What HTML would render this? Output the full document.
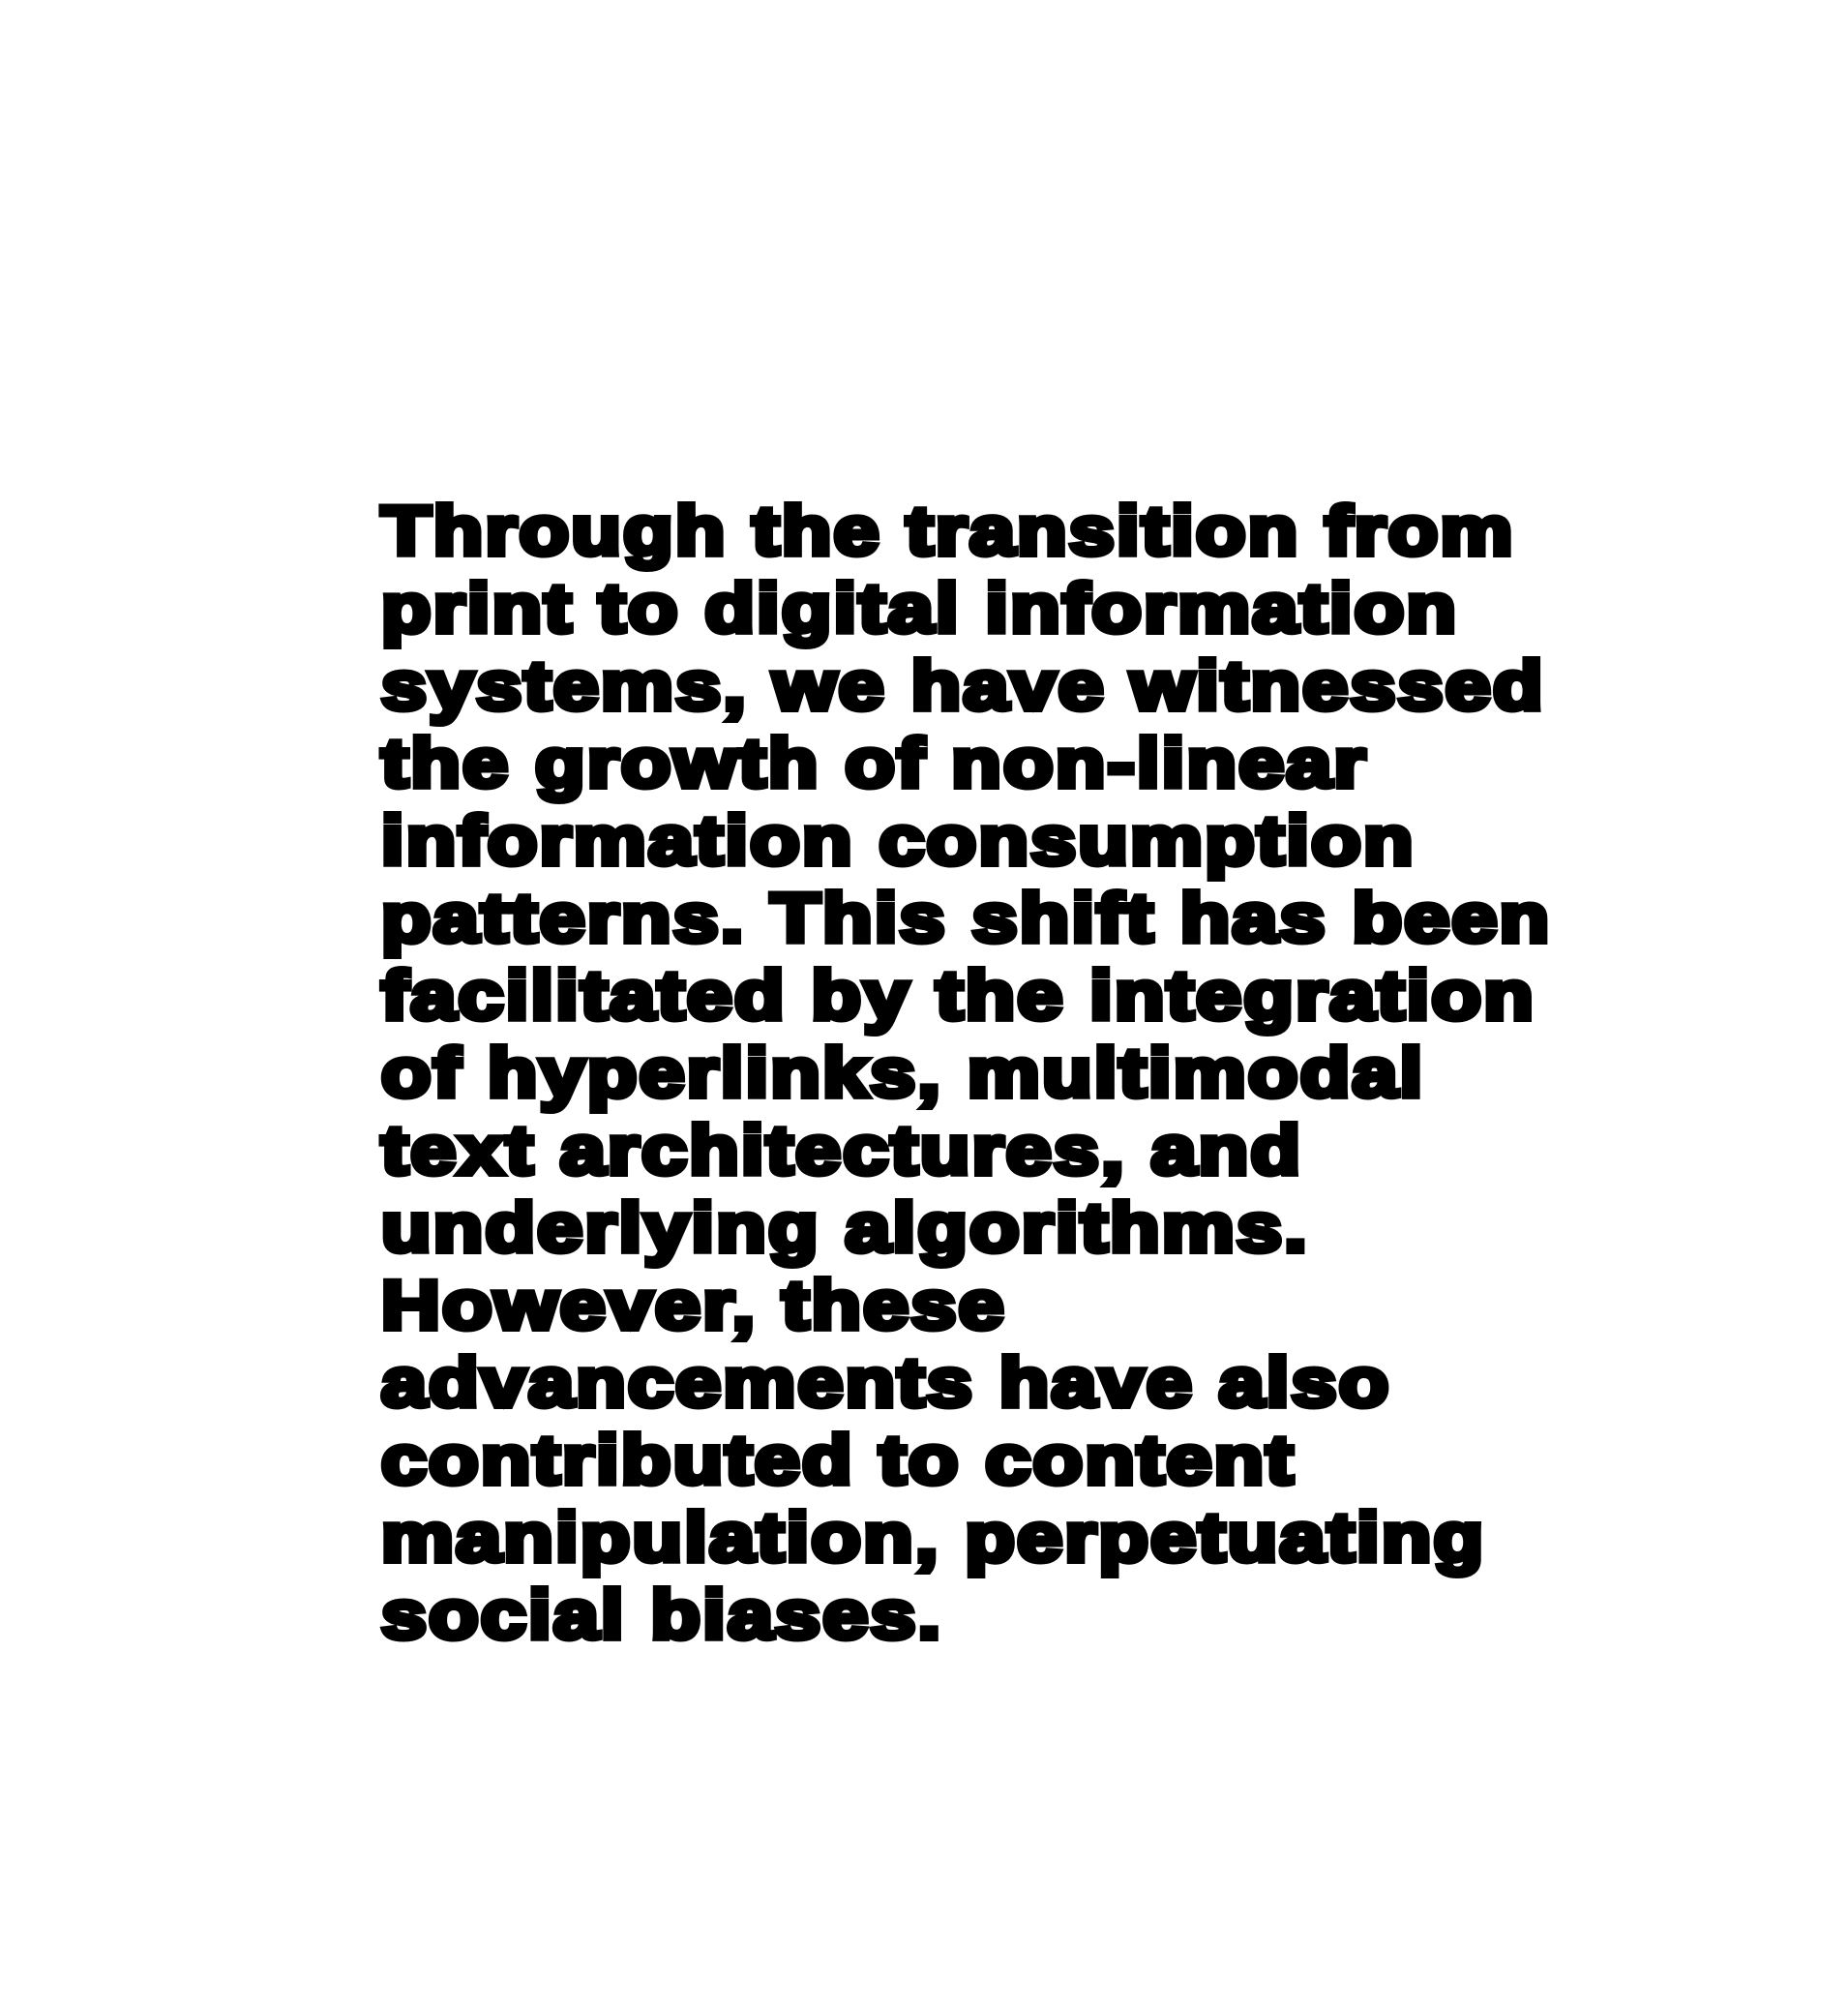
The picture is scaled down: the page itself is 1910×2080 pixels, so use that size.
<!DOCTYPE html>
<html><head><meta charset="utf-8"><style>
html,body{margin:0;padding:0;background:#fff;width:1910px;height:2080px;overflow:hidden}
.t{position:absolute;left:394px;top:510px;font-family:"Liberation Sans",sans-serif;font-weight:bold;font-size:71px;line-height:80px;color:#000;-webkit-text-stroke:6px #000;white-space:nowrap;letter-spacing:2px;transform:scaleX(1.185);transform-origin:0 0}
</style></head><body>
<div class="t">Through the transition from<br>print to digital information<br>systems, we have witnessed<br>the growth of non-linear<br>information consumption<br>patterns. This shift has been<br>facilitated by the integration<br>of hyperlinks, multimodal<br>text architectures, and<br>underlying algorithms.<br>However, these<br>advancements have also<br>contributed to content<br>manipulation, perpetuating<br>social biases.</div>
</body></html>
